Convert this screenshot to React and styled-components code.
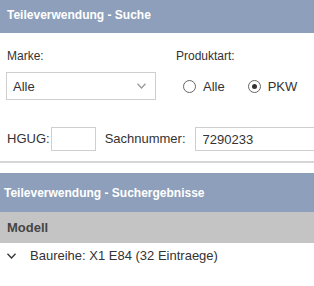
import React from 'react';
import styled, { createGlobalStyle } from 'styled-components';

const GlobalStyle = createGlobalStyle`
  body {
    margin: 0;
    background: #fff;
    font-family: "Liberation Sans", Arial, sans-serif;
    color: #333;
  }
`;

const Page = styled.div`
  width: 314px;
  overflow: hidden;
`;

const PanelHeader = styled.div`
  height: ${({ $height }) => $height}px;
  padding-left: ${({ $indent }) => $indent}px;
  padding-bottom: ${({ $lift }) => $lift || 0}px;
  box-sizing: border-box;
  display: flex;
  align-items: center;
  background: #8e9fbb;
  color: #fff;
  font-size: 12px;
  font-weight: bold;
  white-space: nowrap;
`;

const SearchForm = styled.div`
  padding: 16px 0 10px 6px;
  border-bottom: 2px solid #d6d6d6;
  margin-bottom: 10px;
`;

const TopRow = styled.div`
  display: flex;
  gap: 20px;
`;

const Field = styled.div`
  display: flex;
  flex-direction: column;
  gap: 9px;
`;

const Label = styled.label`
  font-size: ${({ $size }) => $size || 12}px;
  line-height: 14px;
  padding-left: ${({ $pad }) => $pad || 0}px;
  color: #333;
  white-space: nowrap;
`;

const SelectBox = styled.div`
  width: 150px;
  height: 28px;
  box-sizing: border-box;
  border: 1px solid #cfcfcf;
  display: flex;
  align-items: center;
  justify-content: space-between;
  padding: 0 9px 0 6px;
  font-size: 13px;
  color: #333;
`;

const RadioGroup = styled.div`
  height: 28px;
  display: flex;
  align-items: center;
  padding-left: 7px;
  gap: 23px;
`;

const RadioOption = styled.label`
  display: flex;
  align-items: center;
  gap: 7px;
  font-size: 13px;
  color: #333;
`;

const RadioDot = styled.span`
  width: 13px;
  height: 13px;
  box-sizing: border-box;
  border: 1px solid #666;
  border-radius: 50%;
  display: flex;
  align-items: center;
  justify-content: center;

  &::after {
    content: '';
    width: 5px;
    height: 5px;
    border-radius: 50%;
    background: ${({ $checked }) => ($checked ? '#333' : 'transparent')};
  }
`;

const BottomRow = styled.div`
  display: flex;
  align-items: center;
  margin-top: 27px;
  padding-left: 1px;
`;

const TextInput = styled.input`
  width: ${({ $width }) => $width}px;
  height: 24px;
  box-sizing: border-box;
  border: 1px solid #cfcfcf;
  margin: 0 9px 0 ${({ $left }) => $left}px;
  padding: 0 7px;
  font-family: inherit;
  font-size: 13px;
  color: #333;
  outline: none;
  flex-shrink: 0;
`;

const ColumnHead = styled.div`
  height: 31px;
  display: flex;
  align-items: center;
  padding-left: 7px;
  background: #c4c4c4;
  color: #444;
  font-size: 13px;
  font-weight: bold;
`;

const ResultRow = styled.div`
  height: 25px;
  display: flex;
  align-items: center;
  padding-left: 7px;
  gap: 14px;
  font-size: 13px;
  color: #333;
  white-space: nowrap;
`;

function Chevron({ color, width }) {
  return (
    <svg width={width} height="6" viewBox="0 0 9 6" fill="none">
      <polyline points="0.5,0.8 4.5,5 8.5,0.8" stroke={color} strokeWidth="1.3" />
    </svg>
  );
}

export default function App() {
  return (
    <Page>
      <GlobalStyle />
      <PanelHeader $height={33} $indent={7} $lift={3}>Teileverwendung - Suche</PanelHeader>
      <SearchForm>
        <TopRow>
          <Field>
            <Label $pad={1}>Marke:</Label>
            <SelectBox>
              <span>Alle</span>
              <Chevron color="#9a9a9a" width={9} />
            </SelectBox>
          </Field>
          <Field>
            <Label>Produktart:</Label>
            <RadioGroup>
              <RadioOption>
                <RadioDot />
                Alle
              </RadioOption>
              <RadioOption>
                <RadioDot $checked />
                PKW
              </RadioOption>
            </RadioGroup>
          </Field>
        </TopRow>
        <BottomRow>
          <Label $size={13}>HGUG:</Label>
          <TextInput $width={45} $left={1} defaultValue="" />
          <Label $size={13}>Sachnummer:</Label>
          <TextInput $width={150} $left={9} defaultValue="7290233" />
        </BottomRow>
      </SearchForm>
      <PanelHeader $height={39} $indent={4}>Teileverwendung - Suchergebnisse</PanelHeader>
      <ColumnHead>Modell</ColumnHead>
      <ResultRow>
        <Chevron color="#333" width={9} />
        <span>Baureihe: X1 E84 (32 Eintraege)</span>
      </ResultRow>
    </Page>
  );
}
